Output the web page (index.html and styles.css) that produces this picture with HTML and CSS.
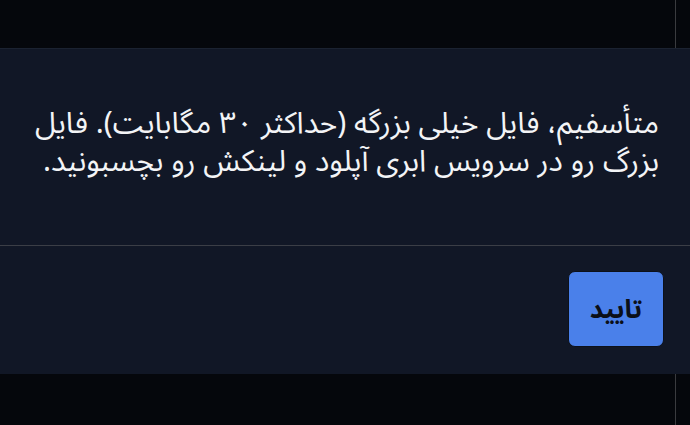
FILE: index.html
```html
<!DOCTYPE html>
<html lang="fa" dir="rtl">
<head>
  <meta charset="UTF-8" />
  <meta name="viewport" content="width=device-width, initial-scale=1.0"/>
  <title>خطا</title>
  <link rel="stylesheet" href="styles.css">
</head>
<body>

  <!-- page behind the overlay -->
  <div class="backdrop">
    <div class="scroll-edge"></div>
  </div>

  <!-- dialog -->
  <div class="dialog" role="dialog">
    <div class="dialog-body">
      <p>متأسفیم، فایل خیلی بزرگه (حداکثر ۳۰ مگابایت). فایل بزرگ رو در سرویس ابری آپلود و لینکش رو بچسبونید.</p>
    </div>
    <div class="dialog-footer">
      <button class="ok-btn">تایید</button>
    </div>
  </div>

</body>
</html>
```

FILE: styles.css
```css
/* Reset & Base */
* {
  box-sizing: border-box;
  margin: 0;
  padding: 0;
}

html, body {
  height: 100%;
}

body {
  font-family: "Noto Sans Arabic", "Noto Sans Arabic UI", "Noto Sans", sans-serif;
  background-color: #05070c;
  color: #f3f4f6;
  overflow: hidden;
  position: relative;
}

/* Backdrop */
.backdrop {
  height: 100%;
  display: flex;
  justify-content: flex-end;
  direction: ltr;
}

.scroll-edge {
  width: 1px;
  height: 100%;
  background-color: #3a3b3f;
  margin-right: 14px;
}

/* Dialog */
.dialog {
  position: absolute;
  top: 48px;
  left: 0;
  right: 0;
  background-color: #111726;
  border-top: 1px solid #1b2231;
}

.dialog-body {
  height: 197px;
  padding: 56px 31px 0 30px;
  border-bottom: 1px solid #3b3e46;
}

.dialog-body p {
  font-size: 30px;
  line-height: 38px;
  text-align: right;
}

.dialog-footer {
  height: 128px;
  display: flex;
  align-items: center;
  justify-content: flex-start;
  padding: 0 26px 2px;
}

/* Button */
.ok-btn {
  width: 96px;
  height: 76px;
  background-color: #4a80ea;
  color: #0b0f18;
  border: 1px solid #0c111b;
  border-radius: 7px;
  font-family: inherit;
  font-size: 26px;
  font-weight: bold;
  cursor: pointer;
}

.ok-btn:hover {
  background-color: #3b6fd8;
}
```
